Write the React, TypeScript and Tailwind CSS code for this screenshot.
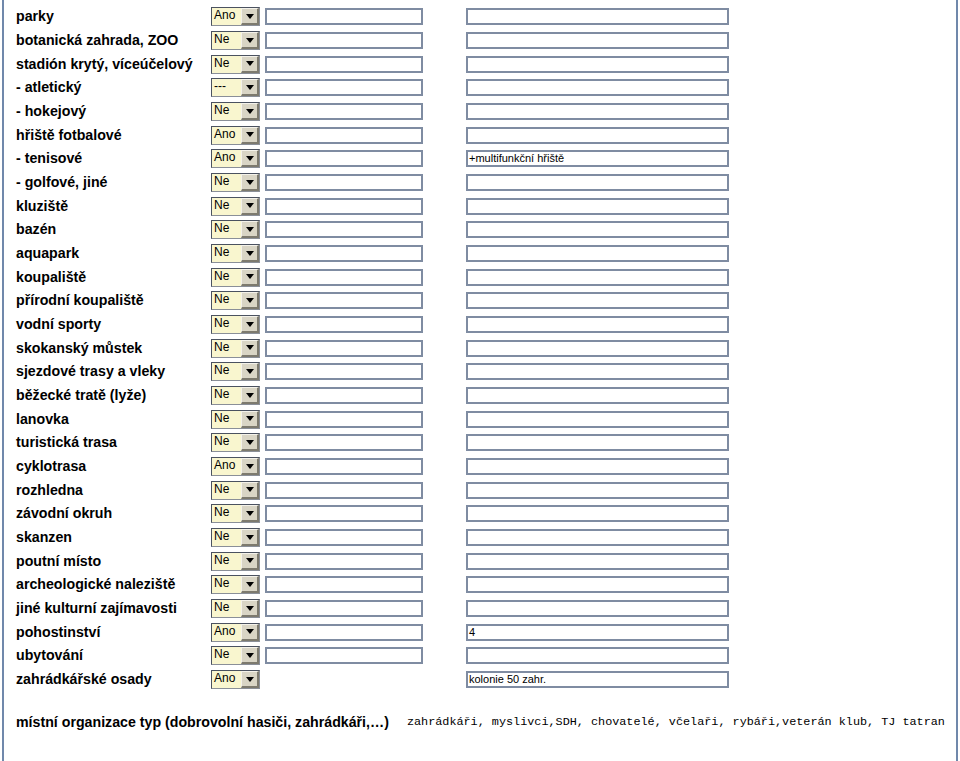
import React from "react";

type Row = {
  label: string;
  value: string;
  note?: string;
  noFirst?: boolean;
};

const rows: Row[] = [
  { label: "parky", value: "Ano" },
  { label: "botanická zahrada, ZOO", value: "Ne" },
  { label: "stadión krytý, víceúčelový", value: "Ne" },
  { label: "- atletický", value: "---" },
  { label: "- hokejový", value: "Ne" },
  { label: "hřiště fotbalové", value: "Ano" },
  { label: "- tenisové", value: "Ano", note: "+multifunkční hřiště" },
  { label: "- golfové, jiné", value: "Ne" },
  { label: "kluziště", value: "Ne" },
  { label: "bazén", value: "Ne" },
  { label: "aquapark", value: "Ne" },
  { label: "koupaliště", value: "Ne" },
  { label: "přírodní koupaliště", value: "Ne" },
  { label: "vodní sporty", value: "Ne" },
  { label: "skokanský můstek", value: "Ne" },
  { label: "sjezdové trasy a vleky", value: "Ne" },
  { label: "běžecké tratě (lyže)", value: "Ne" },
  { label: "lanovka", value: "Ne" },
  { label: "turistická trasa", value: "Ne" },
  { label: "cyklotrasa", value: "Ano" },
  { label: "rozhledna", value: "Ne" },
  { label: "závodní okruh", value: "Ne" },
  { label: "skanzen", value: "Ne" },
  { label: "poutní místo", value: "Ne" },
  { label: "archeologické naleziště", value: "Ne" },
  { label: "jiné kulturní zajímavosti", value: "Ne" },
  { label: "pohostinství", value: "Ano", note: "4" },
  { label: "ubytování", value: "Ne" },
  { label: "zahrádkářské osady", value: "Ano", note: "kolonie 50 zahr.", noFirst: true },
];

// fake select box, old-windows look
const Select = ({ value }: { value: string }) => (
  <div className="flex h-[19px] w-[49px] border border-t-[#4b5260] border-l-[#4b5260] border-r-[#8a8f98] border-b-[#8a8f98] bg-[#f9f6cf]">
    <span className="flex-1 pl-[2px] text-[12px] leading-[14px] text-black">{value}</span>
    <span className="flex w-[18px] items-center justify-center border-t border-l border-t-[#f4f2ea] border-l-[#f4f2ea] border-b-2 border-r-2 border-b-[#7d7a6e] border-r-[#7d7a6e] bg-[#d9d5c5]">
      <svg width="8" height="5" viewBox="0 0 8 5">
        <path d="M0 0h8L4 5z" fill="#000" />
      </svg>
    </span>
  </div>
);

const TextBox = ({ width, value }: { width: string; value?: string }) => (
  <div
    className={`h-[17px] ${width} border-2 border-[#7f8ca2] bg-white pl-[1px] text-[11px] leading-[13px] text-black`}
  >
    {value}
  </div>
);

export default function App() {
  return (
    <div className="h-[761px] w-[960px] bg-white px-[2px] font-['Liberation_Sans',Arial,sans-serif]">
      <div className="h-full border-l-2 border-r-2 border-[#7088ab] pt-[5px]">
        {rows.map((row) => (
          <div key={row.label} className="flex h-[23.68px] items-center">
            <span className="w-[207px] pl-[12px] text-[14.2px] font-bold text-black">{row.label}</span>
            <Select value={row.value} />
            <div className="ml-[5px] w-[158px]">
              {!row.noFirst && <TextBox width="w-[158px]" />}
            </div>
            <div className="ml-[43px]">
              <TextBox width="w-[263px]" value={row.note} />
            </div>
          </div>
        ))}
        <div className="mt-[21px] flex items-center">
          <span className="pl-[12px] text-[14.2px] font-bold text-black">
            místní organizace typ (dobrovolní hasiči, zahrádkáři,…)
          </span>
          <span className="ml-[18px] font-['Liberation_Mono',monospace] text-[11.8px] text-black">
            zahrádkáři, myslivci,SDH, chovatelé, včelaři, rybáři,veterán klub, TJ tatran
          </span>
        </div>
      </div>
    </div>
  );
}
